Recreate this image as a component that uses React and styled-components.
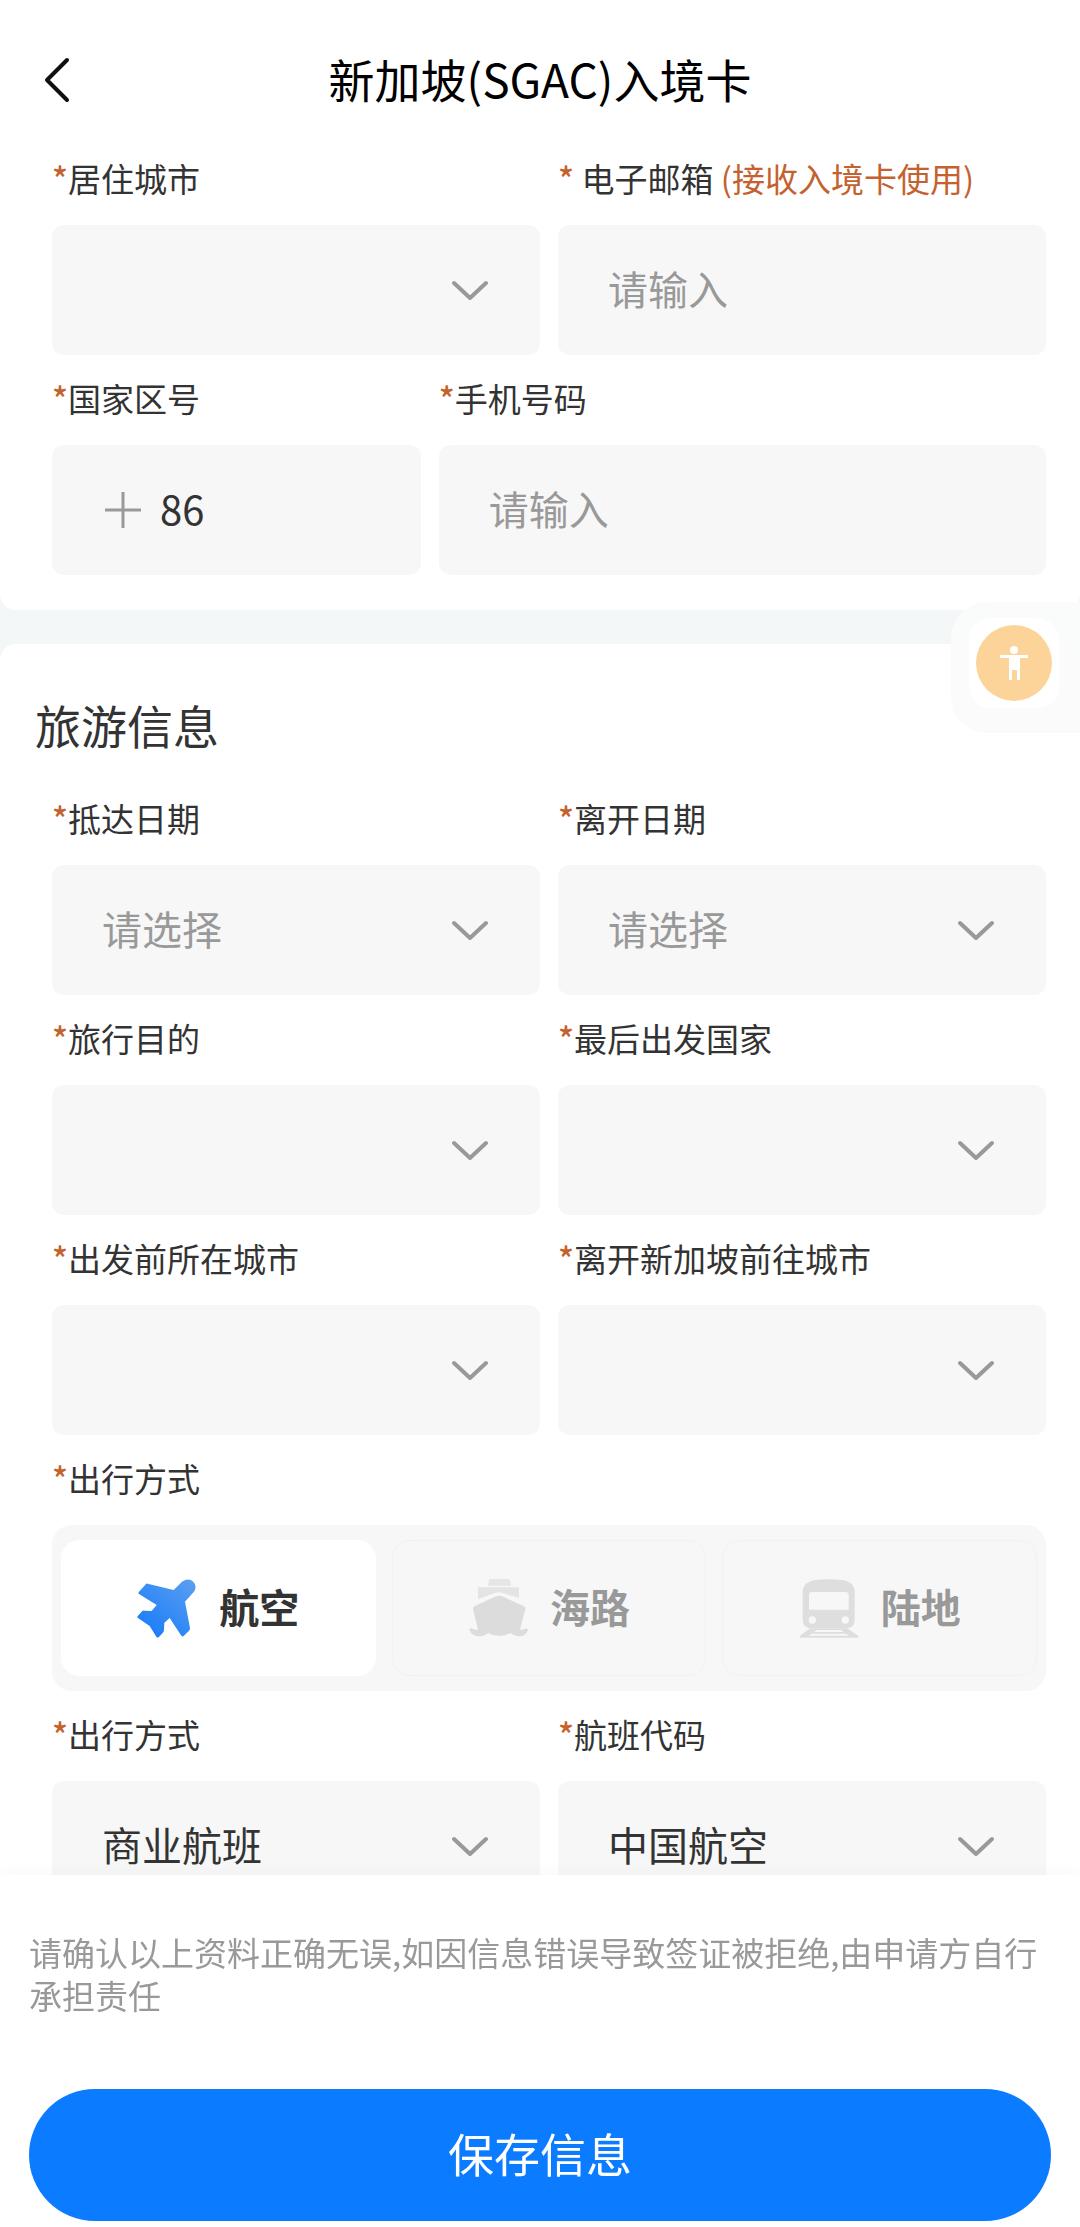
import React, { useState } from 'react';
import styled, { createGlobalStyle, css } from 'styled-components';

const GlobalStyle = createGlobalStyle`
  * {
    box-sizing: border-box;
  }

  body {
    margin: 0;
    background: #fff;
    color: #333;
    font-family: 'Noto Sans CJK SC', sans-serif;
    font-size: 33px;
    line-height: 36px;
  }

  input,
  select,
  button {
    font-family: inherit;
  }
`;

const Screen = styled.div`
  display: flex;
  flex-direction: column;
  height: 100vh;
`;

const Header = styled.header`
  display: grid;
  grid-template-columns: 74px 1fr 74px;
  align-items: center;
  flex: none;
  padding: 48px 20px 32px;
`;

const BackButton = styled.button`
  display: flex;
  justify-content: center;
  padding: 4px 0 0;
  border: 0;
  background: none;
  color: #111;
`;

const Title = styled.h1`
  margin: 0;
  color: #000;
  font-size: 46px;
  font-weight: 400;
  line-height: 60px;
  text-align: center;
`;

const Content = styled.main`
  flex: 1;
  min-height: 0;
  overflow-y: auto;
  scrollbar-width: none;
  background: #f3f7f8;
`;

const Section = styled.section`
  padding: ${({ $first }) => ($first ? '20px 34px 35px 52px' : '50px 34px 35px 52px')};
  border-radius: ${({ $first }) => ($first ? '0 0 16px 16px' : '16px 16px 0 0')};
  background: #fff;

  & + & {
    margin-top: 34px;
  }
`;

const SectionTitle = styled.h2`
  margin: 0 0 46px -17px;
  font-size: 46px;
  font-weight: 400;
  line-height: 60px;
`;

const Rows = styled.div`
  display: grid;
  gap: 25px;
`;

const Row = styled.div`
  display: grid;
  grid-template-columns: ${({ $columns }) => $columns || '1fr 1fr'};
  gap: 18px;
`;

const Field = styled.div`
  display: flex;
  flex-direction: column;
  gap: 29px;
  min-width: 0;
`;

const Label = styled.label`
  white-space: nowrap;
`;

const Accent = styled.span`
  color: #c4622f;
`;

const Star = styled(Accent)`
  font-weight: 500;
`;

const Box = styled.div`
  position: relative;
  display: flex;
  align-items: center;
  height: 130px;
  border-radius: 12px;
  background: #f7f7f7;
`;

const control = css`
  flex: 1;
  min-width: 0;
  height: 100%;
  padding: 0 50px 4px;
  border: 0;
  border-radius: 12px;
  background: none;
  color: #333;
  font-size: 40px;
  outline-color: #0b7cff;
`;

const TextInput = styled.input`
  ${control}

  &::placeholder {
    color: #999;
    opacity: 1;
  }
`;

const CodeInput = styled(TextInput)`
  padding: 0 0 4px 18px;
`;

const Select = styled.select`
  ${control}
  appearance: none;
  color: ${({ $empty }) => ($empty ? '#999' : '#333')};
`;

const ChevronDown = styled.svg`
  position: absolute;
  right: 52px;
  width: 36px;
  height: 20px;
  pointer-events: none;
`;

const PlusIcon = styled.svg`
  flex: none;
  width: 38px;
  height: 38px;
  margin-left: 52px;
`;

const Tabs = styled.div`
  display: grid;
  grid-template-columns: repeat(3, 1fr);
  gap: 16px;
  padding: 15px 9px;
  border-radius: 20px;
  background: #f7f7f7;
`;

const Tab = styled.label`
  display: flex;
  align-items: center;
  justify-content: center;
  gap: 22px;
  height: 136px;
  border: 1px solid ${({ $active }) => ($active ? '#fff' : '#f2f2f2')};
  border-radius: 18px;
  background: ${({ $active }) => ($active ? '#fff' : 'none')};
  color: ${({ $active }) => ($active ? '#333' : '#999')};
  font-size: 40px;
  font-weight: 700;
  cursor: pointer;

  input {
    position: absolute;
    opacity: 0;
    pointer-events: none;
  }

  svg {
    width: 60px;
    height: 60px;
  }

  span {
    padding-bottom: 5px;
  }
`;

const Footer = styled.footer`
  position: relative;
  display: flex;
  flex-direction: column;
  flex: none;
  gap: 72px;
  padding: 56px 29px 6px;
  background: #fff;
  box-shadow: 0 -2px 16px rgba(0, 0, 0, 0.03);
`;

const Notice = styled.p`
  margin: 0;
  color: #999;
  line-height: 43px;
`;

const SaveButton = styled.button`
  height: 132px;
  padding: 0 0 6px;
  border: 0;
  border-radius: 66px;
  background: #0b7cff;
  color: #fff;
  font-size: 46px;
`;

const Helper = styled.aside`
  position: fixed;
  top: 602px;
  right: 0;
  padding: 16px 21px 23px 18px;
  border-radius: 36px 0 0 36px;
  background: rgba(251, 251, 251, 0.9);
  box-shadow: 0 1px 2px rgba(0, 0, 0, 0.04);
`;

const HelperButton = styled.button`
  display: flex;
  align-items: center;
  justify-content: center;
  width: 90px;
  height: 90px;
  padding: 0;
  border: 0;
  border-radius: 22px;
  background: #fff;
`;

const PlaneIcon = () => (
  <svg viewBox="50 52 180 180" aria-hidden="true">
    <defs>
      <linearGradient id="plane" x1="1" y1="0" x2="0.2" y2="1">
        <stop offset="0" stopColor="#5c9ff2" />
        <stop offset="1" stopColor="#1a7cf8" />
      </linearGradient>
    </defs>
    <path
      fill="url(#plane)"
      d="M82 69 L160 88 L185 63 Q205 50 219 63 Q231 76 222 92 L194 123 L209 202 Q210 206 206 210 L190 226 Q185 229 182 224 L148 172 L132 186 L131 209 Q131 213 127 217 L115 230 Q111 232 108 228 L88 196 L53 172 Q49 169 53 165 L65 152 Q68 149 73 150 L94 151 L109 133 L57 101 Q52 97 56 93 L75 72 Q78 68 82 69 Z"
    />
  </svg>
);

const ShipIcon = () => (
  <svg viewBox="50 52 180 180" fill="#dcdcdc" aria-hidden="true">
    <path fill="#e6e6e6" d="M117 55 H171 Q175 55 176 59 L180 75 H109 L113 59 Q114 55 117 55 Z" />
    <path fill="#e4e4e4" d="M80 80 H203 V112 L155 97 Q143 92 131 97 L80 115 Z" />
    <path d="M69 137 L134 107 Q143 103 152 107 L218 137 Q223 140 222 145 L206 207 Q215 209 224 203 Q232 204 229 211 Q221 228 202 227 Q187 226 177 217 Q162 226 144 226 Q126 226 110 217 Q99 228 80 227 Q62 225 54 208 Q54 201 61 203 Q70 209 80 207 L65 145 Q64 140 69 137 Z" />
  </svg>
);

const TrainIcon = () => (
  <svg viewBox="58 52 180 180" fill="#dedede" aria-hidden="true">
    <path
      fillRule="evenodd"
      d="M105 58 Q147 53 190 58 Q220 64 225 88 V178 Q224 202 200 203 H95 Q70 202 69 178 V88 Q74 64 105 58 Z M98 94 Q88 94 88 104 V147 H207 V104 Q207 94 197 94 Z M98 167 A11 11 0 1 0 98 189 A11 11 0 1 0 98 167 Z M197 167 A11 11 0 1 0 197 189 A11 11 0 1 0 197 167 Z"
    />
    <path
      fillRule="evenodd"
      d="M92 203 H203 L236 226 V231 H60 V226 Z M111 208 L103 214 H192 L184 208 Z M96 219 L87 225 H208 L199 219 Z"
    />
  </svg>
);

const MODES = [
  { id: 'air', name: '航空', icon: <PlaneIcon /> },
  { id: 'sea', name: '海路', icon: <ShipIcon /> },
  { id: 'land', name: '陆地', icon: <TrainIcon /> },
];

const SelectField = ({ id, label, value = '' }) => (
  <Field>
    <Label htmlFor={id}>
      <Star>*</Star>
      {label}
    </Label>
    <Box>
      <Select id={id} $empty={value === '' || value === '请选择'}>
        <option>{value}</option>
      </Select>
      <ChevronDown viewBox="0 0 36 20" fill="none" stroke="#999" strokeWidth="4">
        <path d="M2 3 L18 18 L34 3" strokeLinecap="round" strokeLinejoin="round" />
      </ChevronDown>
    </Box>
  </Field>
);

const App = () => {
  const [mode, setMode] = useState('air');

  return (
    <Screen>
      <GlobalStyle />
      <Header>
        <BackButton type="button" aria-label="返回">
          <svg width="28" height="46" viewBox="0 0 28 46" fill="none" stroke="currentColor" strokeWidth="4">
            <path d="M24 3 L4 23 L24 43" strokeLinecap="round" strokeLinejoin="round" />
          </svg>
        </BackButton>
        <Title>新加坡(SGAC)入境卡</Title>
      </Header>

      <Content>
        <Section $first>
          <Rows>
            <Row>
              <SelectField id="city" label="居住城市" />
              <Field>
                <Label htmlFor="email">
                  <Star>*</Star> 电子邮箱 <Accent>(接收入境卡使用)</Accent>
                </Label>
                <Box>
                  <TextInput id="email" type="email" placeholder="请输入" />
                </Box>
              </Field>
            </Row>
            <Row $columns="17fr 28fr">
              <Field>
                <Label htmlFor="code">
                  <Star>*</Star>国家区号
                </Label>
                <Box>
                  <PlusIcon viewBox="0 0 38 38" stroke="#999" strokeWidth="3">
                    <path d="M1 19 H37 M19 1 V37" />
                  </PlusIcon>
                  <CodeInput id="code" defaultValue="86" />
                </Box>
              </Field>
              <Field>
                <Label htmlFor="phone">
                  <Star>*</Star>手机号码
                </Label>
                <Box>
                  <TextInput id="phone" type="tel" placeholder="请输入" />
                </Box>
              </Field>
            </Row>
          </Rows>
        </Section>

        <Section>
          <SectionTitle>旅游信息</SectionTitle>
          <Rows>
            <Row>
              <SelectField id="arrive" label="抵达日期" value="请选择" />
              <SelectField id="leave" label="离开日期" value="请选择" />
            </Row>
            <Row>
              <SelectField id="purpose" label="旅行目的" />
              <SelectField id="country" label="最后出发国家" />
            </Row>
            <Row>
              <SelectField id="from" label="出发前所在城市" />
              <SelectField id="to" label="离开新加坡前往城市" />
            </Row>
            <Field>
              <Label as="div" id="mode-label">
                <Star>*</Star>出行方式
              </Label>
              <Tabs role="radiogroup" aria-labelledby="mode-label">
                {MODES.map(({ id, name, icon }) => (
                  <Tab key={id} $active={mode === id}>
                    <input type="radio" name="mode" checked={mode === id} onChange={() => setMode(id)} />
                    {icon}
                    <span>{name}</span>
                  </Tab>
                ))}
              </Tabs>
            </Field>
            <Row>
              <SelectField id="flight-type" label="出行方式" value="商业航班" />
              <SelectField id="airline" label="航班代码" value="中国航空" />
            </Row>
          </Rows>
        </Section>
      </Content>

      <Footer>
        <Notice>请确认以上资料正确无误,如因信息错误导致签证被拒绝,由申请方自行承担责任</Notice>
        <SaveButton type="button">保存信息</SaveButton>
      </Footer>

      <Helper>
        <HelperButton type="button" aria-label="无障碍">
          <svg width="76" height="76" viewBox="0 0 76 76" fill="#fff">
            <circle cx="38" cy="38" r="38" fill="#fcd49a" />
            <circle cx="38" cy="25" r="4" />
            <path d="M24 30 H52 V33 H44 V55 H41 V45 H36 V55 H33 V33 H24 Z" />
          </svg>
        </HelperButton>
      </Helper>
    </Screen>
  );
};

export default App;
